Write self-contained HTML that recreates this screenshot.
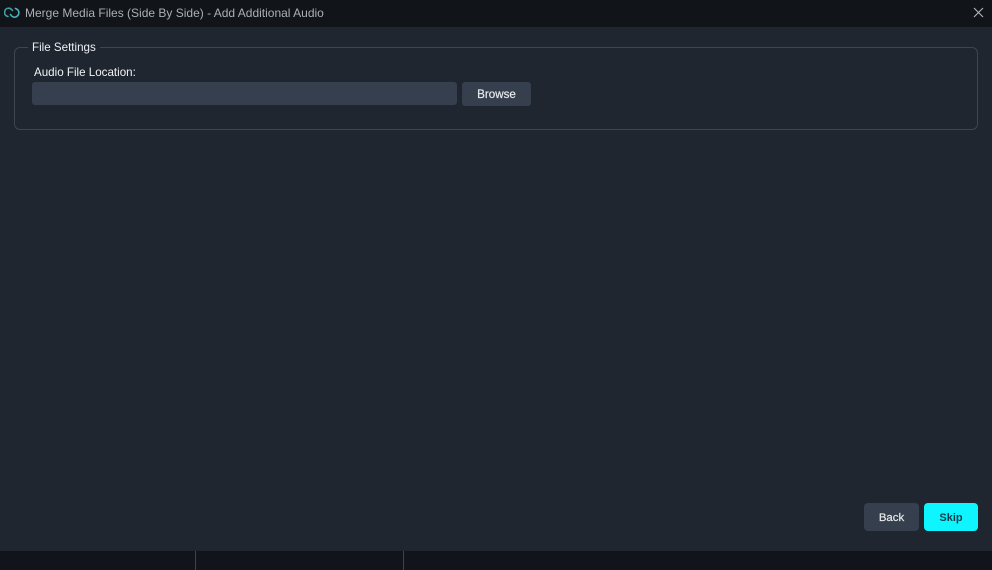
<!DOCTYPE html>
<html>
<head>
<meta charset="utf-8">
<style>
html,body{margin:0;padding:0;background:#1f2630;}
body{width:992px;height:570px;position:relative;overflow:hidden;font-family:"Liberation Sans",sans-serif;}
div{position:absolute;box-sizing:border-box;white-space:nowrap;}
</style>
</head>
<body>
<div style="left:0;top:0;width:992px;height:27px;background:#111419;"></div>
<svg style="position:absolute;left:4px;top:6px" width="16" height="14" viewBox="0 0 16 14" fill="none">
<path d="M4 10.5C1 10 0 7.5 1 4.5C2 2 6 1 8.5 4.5" stroke="#3f9ea6" stroke-width="1.6" stroke-linecap="round"/>
<path d="M11.5 2.5C14.5 3.5 15.5 6 14.5 8.5C13 11.5 9 12.5 6.5 8.5" stroke="#49b4bc" stroke-width="1.6" stroke-linecap="round"/>
</svg>
<div style="left:25px;top:6px;font-size:12px;line-height:15px;color:#aab0b6;">Merge Media Files (Side By Side) - Add Additional Audio</div>
<svg style="position:absolute;left:973px;top:7px" width="11" height="11" viewBox="0 0 11 11"><path d="M1 1L10 10M10 1L1 10" stroke="#b4b8bc" stroke-width="1.1"/></svg>

<div style="left:14px;top:47px;width:964px;height:83px;border:1px solid #3d4650;border-radius:6px;"></div>
<div style="left:28px;top:41px;height:14px;padding:0 4px;background:#1f2630;font-size:11.6px;line-height:14px;color:#eef0f2;">File Settings</div>
<div style="left:34px;top:66px;font-size:11.6px;line-height:14px;color:#f2f3f5;">Audio File Location:</div>
<div style="left:32px;top:82px;width:425px;height:23px;background:#363f4d;border-radius:3px;"></div>
<div style="left:462px;top:82px;width:69px;height:24px;background:#363f4d;border-radius:3px;font-size:11.6px;line-height:25px;text-align:center;color:#e8eaec;-webkit-text-stroke:0.2px #e8eaec;">Browse</div>

<div style="left:864px;top:503px;width:55px;height:28px;background:#363f4d;border-radius:4px;font-size:11.4px;line-height:29px;padding-top:1px;text-align:center;color:#e8eaec;-webkit-text-stroke:0.2px #e8eaec;">Back</div>
<div style="left:924px;top:503px;width:54px;height:28px;background:#0ef5ff;border-radius:4px;font-size:11px;font-weight:bold;line-height:29px;padding-top:1px;text-align:center;color:#0d3f4a;">Skip</div>

<div style="left:0;top:551px;width:992px;height:19px;background:#11141a;"></div>
<div style="left:195px;top:551px;width:1px;height:19px;background:#3d4450;"></div>
<div style="left:403px;top:551px;width:1px;height:19px;background:#3d4450;"></div>
</body>
</html>
